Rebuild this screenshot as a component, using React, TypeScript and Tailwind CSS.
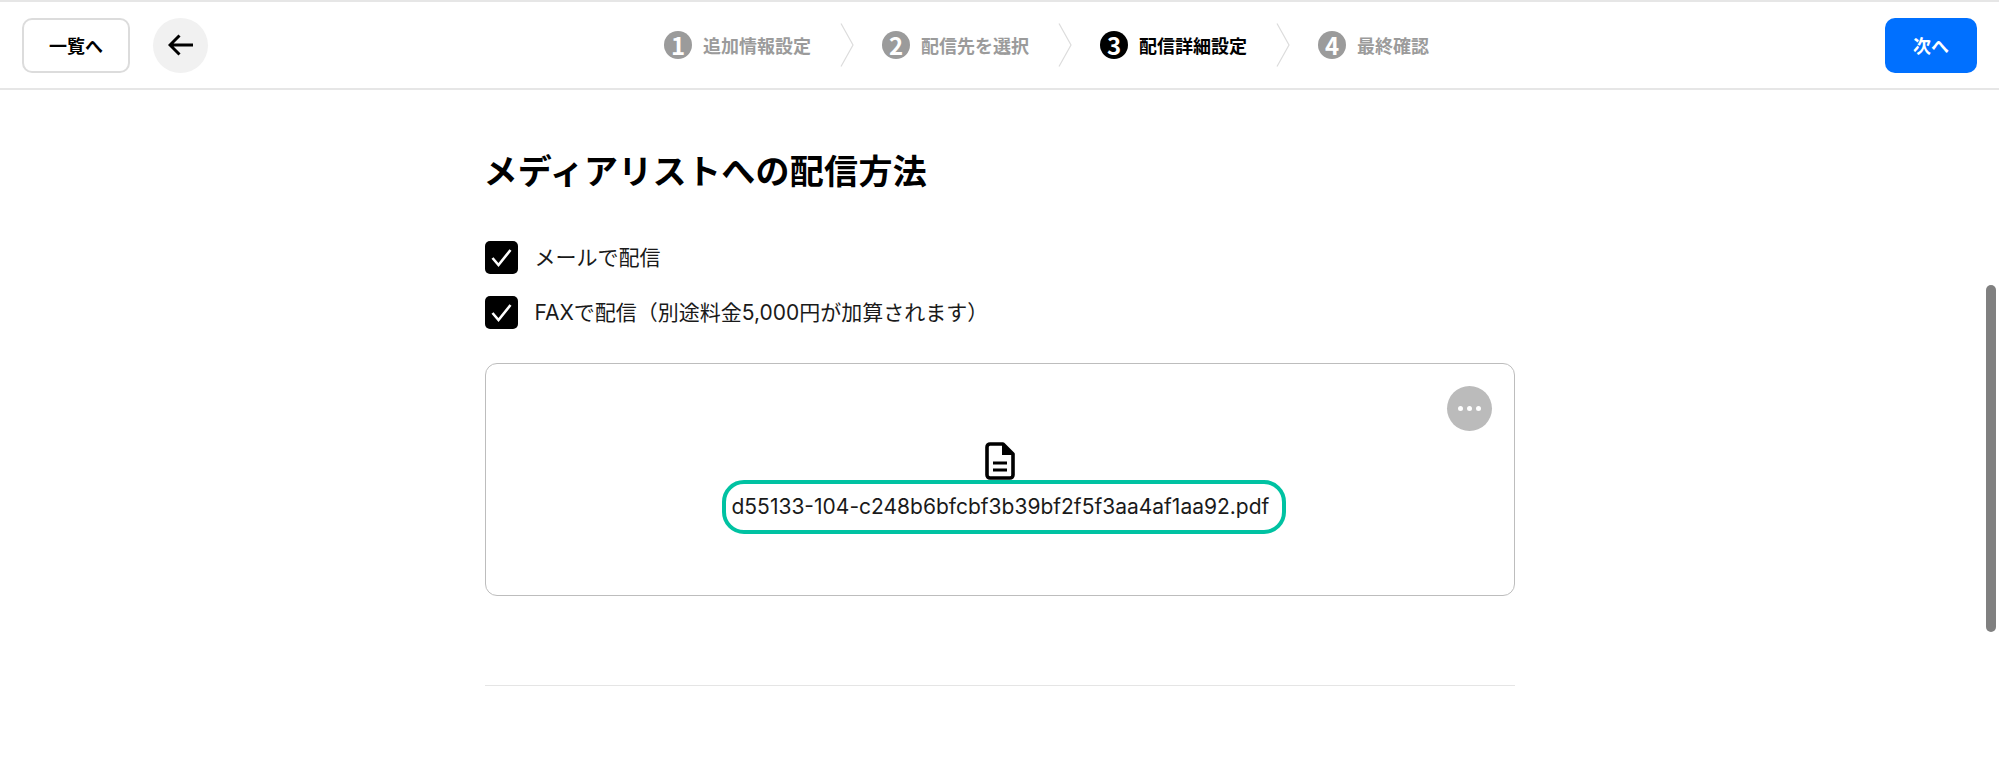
const steps = [
  { no: 1, label: '追加情報設定' },
  { no: 2, label: '配信先を選択' },
  { no: 3, label: '配信詳細設定', active: true },
  { no: 4, label: '最終確認' },
];

const methods = ['メールで配信', 'FAXで配信（別途料金5,000円が加算されます）'];

const Chevron = () => (
  <svg width="14" height="44" viewBox="0 0 14 44" fill="none" className="shrink-0">
    <path d="M1 0.5 L13 22 L1 43.5" stroke="#dcdcdc" strokeWidth="1.2" />
  </svg>
);

const FileIcon = () => (
  <svg width="30" height="38" viewBox="0 0 30 38" fill="none" className="relative">
    <path
      d="M5 2 H18 L28 12 V33 A3 3 0 0 1 25 36 H5 A3 3 0 0 1 2 33 V5 A3 3 0 0 1 5 2 Z"
      fill="#fff"
      stroke="#000"
      strokeWidth="3.6"
      strokeLinejoin="round"
    />
    <path d="M17 2 L28 13 H17 Z" fill="#000" />
    <path d="M8 21 H22 M8 28 H22" stroke="#000" strokeWidth="3" />
  </svg>
);

const CheckBox = () => (
  <span className="w-[33px] h-[33px] rounded-[5px] bg-black flex items-center justify-center shrink-0">
    <svg width="23" height="23" viewBox="0 0 23 23" fill="none">
      <path d="M2.5 12 L8.5 19 L20.5 4" stroke="#fff" strokeWidth="2.6" />
    </svg>
  </span>
);

const App = () => {
  return (
    <div className="relative h-screen overflow-hidden bg-white text-black font-['Noto_Sans_CJK_JP','Noto_Sans',sans-serif]">
      <header className="h-[90px] border-t-2 border-b-2 border-[#e6e6e6] flex items-center px-[22px]">
        <button className="w-[108px] h-[55px] rounded-[10px] border-2 border-[#dcdcdc] text-[18px] font-bold flex items-center justify-center">
          一覧へ
        </button>
        <button className="ml-[23px] w-[55px] h-[55px] rounded-full bg-[#f1f1f1] flex items-center justify-center">
          <svg width="26" height="22" viewBox="0 0 26 22" fill="none">
            <path d="M25 11 H2 M11.5 1.5 L2 11 L11.5 20.5" stroke="#000" strokeWidth="3" />
          </svg>
        </button>

        <ol className="ml-[456px] flex items-center">
          {steps.map((s, i) => (
            <li key={s.no} className="flex items-center">
              <span
                className={
                  s.active
                    ? 'w-[28px] h-[28px] rounded-full bg-black text-white text-[24px] font-bold leading-none flex items-center justify-center'
                    : 'w-[28px] h-[28px] rounded-full bg-[#9b9b9b] text-white text-[24px] font-bold leading-none flex items-center justify-center'
                }
              >
                {s.no}
              </span>
              <span
                className={
                  s.active
                    ? 'ml-[11px] text-[18px] font-bold text-black leading-none'
                    : 'ml-[11px] text-[18px] font-bold text-[#9b9b9b] leading-none'
                }
              >
                {s.label}
              </span>
              {i < steps.length - 1 && (
                <span className="ml-[29px] mr-[28px] flex">
                  <Chevron />
                </span>
              )}
            </li>
          ))}
        </ol>

        <button className="ml-auto w-[92px] h-[55px] rounded-[10px] bg-[#0070ff] text-white text-[18px] font-bold flex items-center justify-center">
          次へ
        </button>
      </header>

      <main className="mx-auto w-[1030px] pt-[58px]">
        <h1 className="text-[34px] font-bold leading-[44px] tracking-[0.3px] -ml-px">メディアリストへの配信方法</h1>

        <div className="mt-[49px] flex flex-col gap-[22px]">
          {methods.map((m) => (
            <label
              key={m}
              className="flex items-center gap-[17px] text-[21px] text-[#1a1a1a] font-['Inter','Noto_Sans_CJK_JP',sans-serif]"
            >
              <CheckBox />
              <span>{m}</span>
            </label>
          ))}
        </div>

        <section className="relative mt-[34px] h-[233px] rounded-[12px] border border-[#bdbdbd] flex flex-col items-center pt-[78px]">
          <button className="absolute top-[22px] right-[22px] w-[45px] h-[45px] rounded-full bg-[#bbbbbb] flex items-center justify-center gap-[4px]">
            <span className="w-[5px] h-[5px] rounded-full bg-white" />
            <span className="w-[5px] h-[5px] rounded-full bg-white" />
            <span className="w-[5px] h-[5px] rounded-full bg-white" />
          </button>
          <FileIcon />
          <div className="ml-[8px] w-[564px] h-[54px] rounded-[22px] border-4 border-[#00c2a2] flex items-center pl-[6px] text-[21px] text-[#1a1a1a] whitespace-nowrap font-['Inter',sans-serif]">
            d55133-104-c248b6bfcbf3b39bf2f5f3aa4af1aa92.pdf
          </div>
        </section>

        <hr className="mt-[89px] border-[#e5e5e5]" />
      </main>

      {/* overlay scrollbar */}
      <div className="absolute top-[285px] right-[3px] w-[10px] h-[347px] rounded-full bg-[#808080]" />
    </div>
  );
};

export default App;
